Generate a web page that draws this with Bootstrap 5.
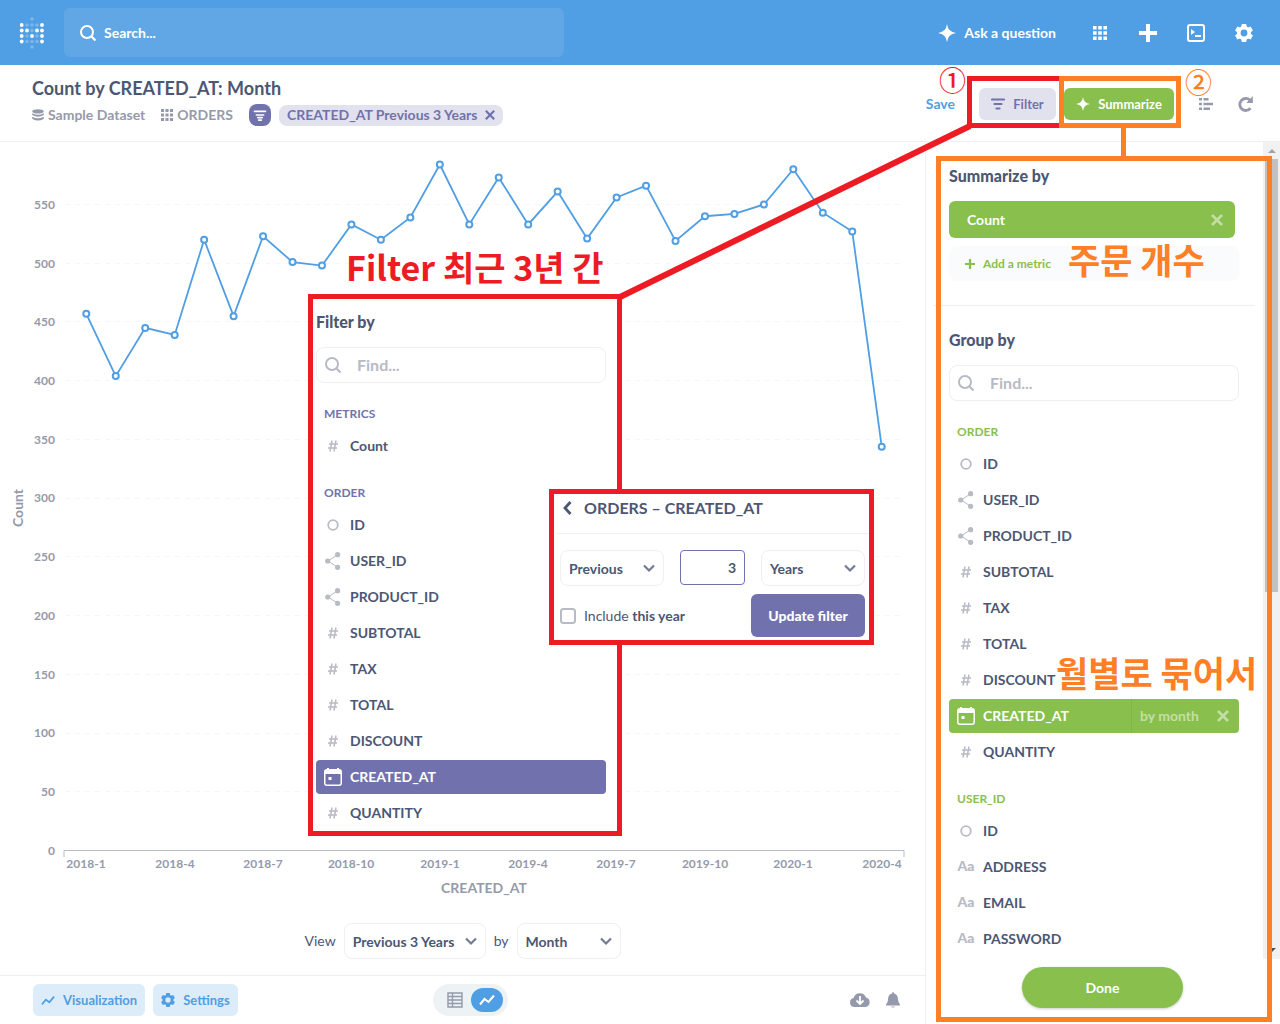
<!DOCTYPE html>
<html lang="en">
<head>
<meta charset="utf-8">
<meta name="viewport" content="width=device-width, initial-scale=1">
<title>Count by CREATED_AT: Month</title>
<link href="https://cdn.jsdelivr.net/npm/bootstrap@5.3.0/dist/css/bootstrap.min.css" rel="stylesheet">
<style>
:root{--ink:#4c5773;--mid:#949aab;--pale:#b8bbc3;--line:#eeeff1;--blue:#509ee3;--green:#88bf4d;--violet:#7172ad;--red:#ed1c24;--orange:#ff7f27}
body{font-family:Lato,"Noto Sans CJK KR",sans-serif;font-size:14px;line-height:20px;color:var(--ink);background:#fff}
.page{min-height:100vh}
svg{display:block;flex-shrink:0}
.ico{width:16px;height:16px;fill:currentColor}
.ico-sm{width:12px;height:12px}
.ico-lg{width:18px;height:18px}
a{color:inherit;text-decoration:none}
.btn{--bs-btn-font-size:14px;--bs-btn-line-height:20px;--bs-btn-border-width:0px}
.topbar{background:var(--blue);height:65px;color:#fff}
.topbar .btn{--bs-btn-color:#fff;--bs-btn-hover-color:#fff}
.sitesearch{width:500px;height:49px;border-radius:6px;background:rgba(255,255,255,.1)}
.sitesearch input,.finder input{background:none;border:0;outline:0;font-weight:700;min-width:0}
.sitesearch input{color:#fff}
.sitesearch input::placeholder{color:#fff;opacity:1}
.navico{width:48px;height:48px}
.qhead{height:77px;border-bottom:1px solid var(--line)}
.qtext{padding:11px 0 0 32px}
.qtitle{font-size:18px;line-height:24px;font-weight:700}
.qtools{padding:1px 26px 0 0}
.toolbtn{--bs-btn-color:var(--mid);margin-left:25px}
.crumb{color:var(--mid);font-weight:700}
.fbadge{width:22px;height:22px;border-radius:8px;background:var(--violet);color:#fff}
.fpill{height:21px;border-radius:8px;background:#e2e1ee;color:var(--violet);font-weight:700}
.fpill .btn{--bs-btn-color:var(--violet)}
.savelink{color:var(--blue);font-weight:700}
.headbtn{--bs-btn-font-size:13px;--bs-btn-font-weight:700;height:32px;border-radius:6px}
.btn-filter{--bs-btn-bg:#e2e1ee;--bs-btn-color:var(--violet);--bs-btn-hover-bg:#d5d4e6;width:77px}
.btn-sum{--bs-btn-bg:var(--green);--bs-btn-color:#fff;--bs-btn-hover-bg:#7bb041;--bs-btn-hover-color:#fff;width:110px}
.chart text{font-weight:700;font-size:12px;fill:var(--mid)}
.chart .axis-name{font-size:14px}
.pick{border:1px solid var(--line);border-radius:8px;height:36px;font-size:14px;font-weight:700;color:var(--ink);padding:0 28px 0 8px;background-position:right 8px center;background-size:12px 12px;
--bs-form-select-bg-img:url("data:image/svg+xml,%3csvg xmlns='http://www.w3.org/2000/svg' viewBox='0 0 12 12'%3e%3cpath fill='none' stroke='%23727b92' stroke-width='2.2' d='M1 3.5l5 5 5-5'/%3e%3c/svg%3e")}
.pick-wide{width:142px}
.pick-std{width:104px}
.foot{height:49px;border-top:1px solid var(--line);padding:0 17px 0 33px}
.footside{flex:1 1 0}
.btn-vis{--bs-btn-bg:#dcecf9;--bs-btn-color:var(--blue);--bs-btn-hover-bg:#cbe2f6;--bs-btn-font-size:13px;--bs-btn-font-weight:700;height:32px;border-radius:6px;padding:0 8px}
.switcher{width:75px;height:32px;border-radius:16px;background:#edf2f5;color:var(--mid)}
.switcher .btn{width:32px;height:24px;border-radius:12px;color:inherit}
.switcher .btn.active{background:var(--blue);color:#fff}
.utility{fill:var(--mid)}
.side{width:355px;border-left:1px solid var(--line)}
.side-body{padding:22px 24px 0 23px}
.ptitle{font-size:16px;line-height:24px;font-weight:900;margin-bottom:13px}
.metric{height:37px;border-radius:6px;background:var(--green);color:#fff;font-weight:700;padding:0 12px 0 18px;margin-right:4px}
.addmetric{height:35px;border-radius:8px;background:#f9fbfc;color:var(--green);font-size:12px;font-weight:700;margin-top:8px;padding:0 16px}
.split{height:1px;background:var(--line);margin:24px -16px 22px}
.finder{height:36px;border:1px solid var(--line);border-radius:8px;padding:0 8px;margin-bottom:3px;color:var(--pale)}
.finder input{font-size:16px;color:var(--ink);margin-left:16px}
.finder input::placeholder{color:var(--pale);opacity:1}
.ghead{font-size:12px;line-height:16px;font-weight:700;padding:20px 8px 7px;color:var(--green)}
.ghead-v{color:var(--violet)}
.field{height:34px;border-radius:4px;margin-bottom:2px;padding-left:8px;font-weight:700}
.field>.kind{width:18px;margin-right:8px;color:var(--pale);display:flex;justify-content:center}
.field.on{background:var(--green);color:#fff}
.field.on>.kind{color:#fff}
.field.on-v{background:var(--violet)}
.kind.txt{font-weight:900;padding-bottom:2px}
.bucket{width:108px;border-left:1px solid #7fb545;color:rgba(255,255,255,.5);padding:0 10px 0 8px}
.sbar{width:17px;background:#f1f1f1}
.sthumb{width:13px;height:433px;background:#c1c1c1}
.arrow{width:17px;height:17px;fill:#a3a3a3}
.arrow-dark{fill:#505050}
.donebar{padding:8px 1px 16px 0}
.btn-done{--bs-btn-bg:var(--green);--bs-btn-color:#fff;--bs-btn-hover-bg:#7bb041;--bs-btn-hover-color:#fff;--bs-btn-font-weight:700;width:161px;height:41px;border-radius:21px;box-shadow:0 1px 3px rgba(0,0,0,.2)}
/* call-outs drawn over the page */
.callout{position:absolute;background:#fff;border:5px solid var(--red)}
.co-filter{left:308px;top:294px;width:314px;height:542px;padding:11px 11px 0 3px}
.co-edit{left:549px;top:489px;width:325px;height:156px}
.edit-title{height:40px;padding:0 6px 12px 5px;margin-left:3px;gap:12px;border-bottom:1px solid var(--line);font-size:16px;font-weight:700}
.edit-body{padding:16px 4px 0 6px}
.numbox{width:65px;height:35px;border:1px solid var(--violet);border-radius:4px;text-align:right;padding:0 8px;color:var(--ink);font-weight:700;outline:0}
.inccheck{width:16px;height:16px;border:2px solid var(--pale);border-radius:4px;margin:0}
.btn-update{--bs-btn-bg:var(--violet);--bs-btn-color:#fff;--bs-btn-hover-bg:#61629b;--bs-btn-hover-color:#fff;--bs-btn-font-weight:900;width:114px;height:43px;border-radius:6px}
.ink{position:absolute;left:0;top:0;pointer-events:none}
.ink text{font-family:"Noto Sans CJK KR",sans-serif;font-weight:700;font-size:35px}
.ink .note-red{font-size:34px}
.ink .num{font-size:27px;font-weight:500}
</style>
<script src="https://cdn.jsdelivr.net/npm/bootstrap@5.3.0/dist/js/bootstrap.bundle.min.js"></script>
</head>
<body>
<svg class="d-none" aria-hidden="true">
  <symbol id="i-search" viewBox="0 0 16 16"><circle cx="7" cy="7" r="6" fill="none" stroke="currentColor" stroke-width="2"/><path d="M11.5 11.5l4 4" stroke="currentColor" stroke-width="2.200"/></symbol>
  <symbol id="i-star" viewBox="0 0 16 16"><path d="M8 0Q8.800 7.200 16 8Q8.800 8.800 8 16Q7.200 8.800 0 8Q7.200 7.200 8 0z"/></symbol>
  <symbol id="i-grid" viewBox="0 0 14 14"><path d="M0 0h3.600v3.600H0zM5.200 0h3.600v3.600H5.200zM10.400 0H14v3.600h-3.600zM0 5.200h3.600v3.600H0zM5.200 5.200h3.600v3.600H5.200zM10.400 5.200H14v3.600h-3.600zM0 10.400h3.600V14H0zM5.200 10.400h3.600V14H5.200zM10.400 10.400H14V14h-3.600z"/></symbol>
  <symbol id="i-plus" viewBox="0 0 18 18"><path d="M7 0h4v7h7v4h-7v7H7v-7H0V7h7z"/></symbol>
  <symbol id="i-term" viewBox="0 0 18 18"><rect x="1" y="1" width="16" height="16" rx="2" fill="none" stroke="currentColor" stroke-width="2"/><path d="M4 5l4 3-4 3z"/><path d="M8 11h6v2H8z"/></symbol>
  <symbol id="i-gear" viewBox="0 0 18 18"><circle cx="9" cy="9" r="5.200" fill="none" stroke="currentColor" stroke-width="3.600"/><path d="M6.800 0h4.400l.8 4H6zM6.800 18h4.400l.8-4H6z"/><path d="M6.800 0h4.400l.8 4H6zM6.800 18h4.400l.8-4H6z" transform="rotate(60 9 9)"/><path d="M6.800 0h4.400l.8 4H6zM6.800 18h4.400l.8-4H6z" transform="rotate(120 9 9)"/></symbol>
  <symbol id="i-db" viewBox="0 0 12 12"><ellipse cx="6" cy="2.400" rx="5.800" ry="2.200"/><path d="M.2 4.200q5.800 3.200 11.600 0v1.800q-5.800 3.600-11.600 0zM.2 7.700q5.800 3.200 11.600 0v2q-5.800 3.800-11.600 0z"/></symbol>
  <symbol id="i-funnel" viewBox="0 0 14 12"><path d="M1 1.500h12M3 5.500h8M4.500 8.300h5M5.500 11h3" fill="none" stroke="currentColor" stroke-width="1.800" stroke-linecap="round"/></symbol>
  <symbol id="i-funnel3" viewBox="0 0 14 12"><path d="M1 1.500h12M3.500 6h7M5.500 10.500h3" fill="none" stroke="currentColor" stroke-width="2.200" stroke-linecap="round"/></symbol>
  <symbol id="i-x" viewBox="0 0 12 12"><path d="M1 1l10 10M11 1L1 11" stroke="currentColor" stroke-width="2.600"/></symbol>
  <symbol id="i-list" viewBox="0 0 14 12"><path d="M0 0h3v2.600H0zM4.500 0h5v2.600h-5zM0 4.700h3v2.600H0zM4.500 4.700H14v2.600H4.500zM0 9.400h3V12H0zM4.500 9.400H11V12H4.500z"/></symbol>
  <symbol id="i-reload" viewBox="0 0 16 16"><path d="M12.500 12.200A6 6 0 1 1 11.800 4" fill="none" stroke="currentColor" stroke-width="2.800"/><path d="M14.800 0v7H8.300z"/></symbol>
  <symbol id="i-trend" viewBox="0 0 16 12"><path d="M1 10.500L5.500 5l4 3L15 1.500" fill="none" stroke="currentColor" stroke-width="2"/></symbol>
  <symbol id="i-table" viewBox="0 0 16 16"><path d="M1 1h14v14H1zM1 4.500h14M1 8h14M1 11.500h14M5.500 1v14" fill="none" stroke="currentColor" stroke-width="1.400"/></symbol>
  <symbol id="i-cloud" viewBox="0 0 20 14"><path d="M4.500 14A4.500 4.500 0 0 1 3.600 5.100 6.500 6.500 0 0 1 16 4.600 4.800 4.800 0 0 1 15.500 14z"/><path d="M10 3v8M6.500 7.500L10 11l3.500-3.500" fill="none" stroke="#fff" stroke-width="1.800"/></symbol>
  <symbol id="i-bell" viewBox="0 0 14 16"><path d="M7 0q1 0 1 1.500 4 .8 4 6 0 3 2 5v1H0v-1q2-2 2-5 0-5.200 4-6Q6 0 7 0z"/><path d="M5 14.200h4q-.5 1.600-2 1.600t-2-1.600z" opacity=".6"/></symbol>
  <symbol id="i-hash" viewBox="0 0 10 12"><path d="M4 .5L2 11.500M8 .5L6 11.500M1 4h9M0 8h9" fill="none" stroke="currentColor" stroke-width="1.500"/></symbol>
  <symbol id="i-ring" viewBox="0 0 12 12"><circle cx="6" cy="6" r="4.800" fill="none" stroke="currentColor" stroke-width="1.800"/></symbol>
  <symbol id="i-share" viewBox="0 0 16 18"><path d="M13 2.500L3 9l10 6.500" fill="none" stroke="currentColor"/><circle cx="2.700" cy="9" r="2.600"/><circle cx="12.600" cy="2.700" r="2.600"/><circle cx="12.600" cy="15.300" r="2.600"/></symbol>
  <symbol id="i-cal" viewBox="0 0 18 18"><path d="M3 0h2v1h8V0h2v1q3 .2 3 3v11q0 3-3 3H3q-3 0-3-3V4q0-2.800 3-3zM1.500 6v9q0 1.500 1.500 1.500h12q1.500 0 1.500-1.500V6z" fill-rule="evenodd"/><path d="M4.500 9h3v3h-3z"/></symbol>
  <symbol id="i-back" viewBox="0 0 10 14"><path d="M8.500 1L3 7l5.500 6" fill="none" stroke="currentColor" stroke-width="2.800"/></symbol>
</svg>

<div class="page position-relative d-flex flex-column">
  <header class="topbar d-flex align-items-center">
    <a href="#" class="ps-3" aria-label="Home">
      <svg width="32" height="34" viewBox="0 0 32 34" fill="#fff">
        <g opacity=".25"><circle cx="16" cy="3" r="1.800"/><circle cx="11" cy="9" r="1.800"/><circle cx="16" cy="9" r="1.800"/><circle cx="21" cy="9" r="1.800"/><circle cx="16" cy="14.500" r="1.800"/><circle cx="11" cy="20" r="1.800"/><circle cx="21" cy="20" r="1.800"/><circle cx="11" cy="25.500" r="1.800"/><circle cx="16" cy="25.500" r="1.800"/><circle cx="21" cy="25.500" r="1.800"/><circle cx="16" cy="31" r="1.800"/></g>
        <circle cx="5.700" cy="9" r="1.900"/><circle cx="26" cy="9" r="1.900"/><circle cx="5.700" cy="14.500" r="1.900"/><circle cx="11" cy="14.500" r="1.900"/><circle cx="21" cy="14.500" r="1.900"/><circle cx="26" cy="14.500" r="1.900"/><circle cx="5.700" cy="20" r="1.900"/><circle cx="16" cy="20" r="1.900"/><circle cx="26" cy="20" r="1.900"/><circle cx="5.700" cy="25.500" r="1.900"/><circle cx="26" cy="25.500" r="1.900"/>
      </svg>
    </a>
    <label class="sitesearch d-flex align-items-center gap-2 ms-3 px-3">
      <svg class="ico"><use href="#i-search"/></svg>
      <input class="p-0 flex-grow-1" type="search" placeholder="Search..." aria-label="Search">
    </label>
    <nav class="ms-auto d-flex align-items-center pe-2 me-1">
      <a href="#" class="d-flex align-items-center gap-2 fw-bold me-3 pe-1"><svg class="ico ico-lg"><use href="#i-star"/></svg>Ask a question</a>
      <button class="btn navico p-0 d-flex align-items-center justify-content-center" aria-label="Browse data"><svg width="14" height="14" fill="currentColor"><use href="#i-grid"/></svg></button>
      <button class="btn navico p-0 d-flex align-items-center justify-content-center" aria-label="Create"><svg class="ico ico-lg"><use href="#i-plus"/></svg></button>
      <button class="btn navico p-0 d-flex align-items-center justify-content-center" aria-label="Write SQL"><svg class="ico ico-lg"><use href="#i-term"/></svg></button>
      <button class="btn navico p-0 d-flex align-items-center justify-content-center" aria-label="Settings"><svg class="ico ico-lg"><use href="#i-gear"/></svg></button>
    </nav>
  </header>

  <section class="qhead d-flex justify-content-between">
    <div class="qtext">
      <h1 class="qtitle mb-0">Count by CREATED_AT: Month</h1>
      <div class="d-flex align-items-center mt-1">
        <a href="#" class="crumb d-flex align-items-center gap-1 me-3"><svg class="ico ico-sm"><use href="#i-db"/></svg>Sample Dataset</a>
        <a href="#" class="crumb d-flex align-items-center gap-1 me-3"><svg class="ico ico-sm"><use href="#i-grid"/></svg>ORDERS</a>
        <span class="fbadge d-flex align-items-center justify-content-center me-2"><svg width="14" height="11"><use href="#i-funnel"/></svg></span>
        <span class="fpill d-flex align-items-center px-2 gap-2">CREATED_AT Previous 3 Years<button class="btn p-0" aria-label="Remove filter"><svg width="10" height="10"><use href="#i-x"/></svg></button></span>
      </div>
    </div>
    <div class="qtools d-flex align-items-center">
      <a href="#" class="savelink me-4">Save</a>
      <button class="btn btn-filter headbtn p-0 me-2 d-flex align-items-center justify-content-center gap-2"><svg width="14" height="12"><use href="#i-funnel3"/></svg>Filter</button>
      <button class="btn btn-sum headbtn p-0 d-flex align-items-center justify-content-center gap-2"><svg width="14" height="14" fill="currentColor"><use href="#i-star"/></svg>Summarize</button>
      <button class="btn toolbtn p-0" aria-label="Show editor"><svg width="14" height="12" fill="currentColor"><use href="#i-list"/></svg></button>
      <button class="btn toolbtn p-0" aria-label="Refresh"><svg class="ico"><use href="#i-reload"/></svg></button>
    </div>
  </section>

  <div class="d-flex flex-grow-1">
    <main class="flex-grow-1 d-flex flex-column">
      <svg class="chart w-100" viewBox="0 142 925 781" role="img" aria-label="Count by month">
        <g stroke="#f5f6f7" stroke-dasharray="5 5"><path d="M65 204.500H904M65 263.500H904M65 321.500H904M65 380.500H904M65 439.500H904M65 498.500H904M65 556.500H904M65 615.500H904M65 674.500H904M65 733.500H904M65 791.500H904"/></g>
        <g text-anchor="end"><text x="55" y="209">550</text><text x="55" y="268">500</text><text x="55" y="326">450</text><text x="55" y="385">400</text><text x="55" y="444">350</text><text x="55" y="502">300</text><text x="55" y="561">250</text><text x="55" y="620">200</text><text x="55" y="679">150</text><text x="55" y="737">100</text><text x="55" y="796">50</text><text x="55" y="855">0</text></g>
        <path d="M64 857V850.500H904V857" fill="none" stroke="#b8bbc8"/>
        <g text-anchor="middle"><text x="86" y="868">2018-1</text><text x="175" y="868">2018-4</text><text x="263" y="868">2018-7</text><text x="351" y="868">2018-10</text><text x="440" y="868">2019-1</text><text x="528" y="868">2019-4</text><text x="616" y="868">2019-7</text><text x="705" y="868">2019-10</text><text x="793" y="868">2020-1</text><text x="882" y="868">2020-4</text>
        <text class="axis-name" x="484" y="893">CREATED_AT</text><text class="axis-name" transform="translate(23 508) rotate(-90)">Count</text></g>
        <g id="series" fill="none" stroke="#509ee3" stroke-width="2"></g>
      </svg>
      <div class="d-flex align-items-center justify-content-center gap-2 pb-3">
        <label for="v1">View</label>
        <select id="v1" class="form-select pick pick-wide"><option>Previous 3 Years</option></select>
        <label for="v2">by</label>
        <select id="v2" class="form-select pick pick-std"><option>Month</option></select>
      </div>
      <footer class="foot mt-auto d-flex align-items-center">
        <div class="footside d-flex gap-2">
          <button class="btn btn-vis d-flex align-items-center gap-2"><svg width="14" height="11"><use href="#i-trend"/></svg>Visualization</button>
          <button class="btn btn-vis d-flex align-items-center gap-2"><svg width="14" height="14" fill="currentColor"><use href="#i-gear"/></svg>Settings</button>
        </div>
        <div class="switcher d-flex align-items-center justify-content-center">
          <button class="btn p-0 d-flex align-items-center justify-content-center" aria-label="Table"><svg class="ico"><use href="#i-table"/></svg></button>
          <button class="btn active p-0 d-flex align-items-center justify-content-center" aria-label="Chart"><svg width="16" height="12"><use href="#i-trend"/></svg></button>
        </div>
        <div class="footside utility d-flex align-items-center justify-content-end gap-3">
          <button class="btn p-0" aria-label="Download"><svg width="20" height="14"><use href="#i-cloud"/></svg></button>
          <button class="btn p-0 me-2" aria-label="Alerts"><svg width="14" height="16"><use href="#i-bell"/></svg></button>
        </div>
      </footer>
    </main>

    <aside class="side flex-shrink-0 d-flex flex-column">
      <div class="d-flex flex-grow-1">
        <div class="side-body flex-grow-1">
          <h2 class="ptitle">Summarize by</h2>
          <div class="metric d-flex align-items-center justify-content-between">Count<button class="btn p-0 opacity-50" aria-label="Remove Count"><svg class="ico ico-sm text-white"><use href="#i-x"/></svg></button></div>
          <a href="#" class="addmetric d-flex align-items-center gap-2"><svg width="10" height="10" fill="currentColor"><use href="#i-plus"/></svg>Add a metric</a>
          <div class="split"></div>
          <h2 class="ptitle">Group by</h2>
          <label class="finder d-flex align-items-center"><svg class="ico"><use href="#i-search"/></svg><input class="flex-grow-1 p-0" type="text" placeholder="Find..." aria-label="Find a column"></label>
          <div class="ghead">ORDER</div>
          <a href="#" class="field d-flex align-items-center"><span class="kind"><svg class="ico ico-sm"><use href="#i-ring"/></svg></span>ID</a>
          <a href="#" class="field d-flex align-items-center"><span class="kind"><svg width="16" height="18" fill="currentColor"><use href="#i-share"/></svg></span>USER_ID</a>
          <a href="#" class="field d-flex align-items-center"><span class="kind"><svg width="16" height="18" fill="currentColor"><use href="#i-share"/></svg></span>PRODUCT_ID</a>
          <a href="#" class="field d-flex align-items-center"><span class="kind"><svg width="10" height="12"><use href="#i-hash"/></svg></span>SUBTOTAL</a>
          <a href="#" class="field d-flex align-items-center"><span class="kind"><svg width="10" height="12"><use href="#i-hash"/></svg></span>TAX</a>
          <a href="#" class="field d-flex align-items-center"><span class="kind"><svg width="10" height="12"><use href="#i-hash"/></svg></span>TOTAL</a>
          <a href="#" class="field d-flex align-items-center"><span class="kind"><svg width="10" height="12"><use href="#i-hash"/></svg></span>DISCOUNT</a>
          <div class="field on d-flex align-items-center"><span class="kind"><svg class="ico ico-lg"><use href="#i-cal"/></svg></span>CREATED_AT
            <div class="bucket ms-auto h-100 d-flex align-items-center justify-content-between">by month<svg class="ico ico-sm"><use href="#i-x"/></svg></div></div>
          <a href="#" class="field d-flex align-items-center"><span class="kind"><svg width="10" height="12"><use href="#i-hash"/></svg></span>QUANTITY</a>
          <div class="ghead">USER_ID</div>
          <a href="#" class="field d-flex align-items-center"><span class="kind"><svg class="ico ico-sm"><use href="#i-ring"/></svg></span>ID</a>
          <a href="#" class="field d-flex align-items-center"><span class="kind txt">Aa</span>ADDRESS</a>
          <a href="#" class="field d-flex align-items-center"><span class="kind txt">Aa</span>EMAIL</a>
          <a href="#" class="field d-flex align-items-center"><span class="kind txt">Aa</span>PASSWORD</a>
        </div>
        <div class="sbar d-flex flex-column align-items-center">
          <svg class="arrow" viewBox="0 0 17 17"><path d="M5 11l4-4 4 4z"/></svg>
          <div class="sthumb"></div>
          <svg class="arrow arrow-dark mt-auto" viewBox="0 0 17 17"><path d="M5 6l4 4 4-4z"/></svg>
        </div>
      </div>
      <div class="donebar d-flex justify-content-center"><button class="btn btn-done">Done</button></div>
    </aside>
  </div>

  <svg class="ink" width="1280" height="1024" fill="none" stroke-width="5">
    <path d="M970 126L620 297" stroke="#ed1c24" stroke-width="6"/>
    <path d="M1061 78.500H969.500V125.500H1061" stroke="#ed1c24"/>
    <rect x="1061.500" y="78.500" width="117" height="47" stroke="#ff7f27"/>
    <path d="M1123.500 128V157" stroke="#ff7f27"/>
    <rect x="938.500" y="158.500" width="331" height="861" stroke="#ff7f27"/>
    <g fill="#ed1c24"><text class="note-red" x="346" y="281">Filter 최근 3년 간</text><text class="num" x="939" y="91">①</text></g>
    <g fill="#ff7f27"><text x="1068" y="274">주문 개수</text><text x="1056" y="687">월별로 묶어서</text><text class="num" x="1185" y="93">②</text></g>
  </svg>

  <div class="callout co-filter">
    <h2 class="ptitle">Filter by</h2>
    <label class="finder d-flex align-items-center"><svg class="ico"><use href="#i-search"/></svg><input class="flex-grow-1 p-0" type="text" placeholder="Find..." aria-label="Find a filter"></label>
    <div class="ghead ghead-v">METRICS</div>
    <a href="#" class="field d-flex align-items-center"><span class="kind"><svg width="10" height="12"><use href="#i-hash"/></svg></span>Count</a>
    <div class="ghead ghead-v">ORDER</div>
    <a href="#" class="field d-flex align-items-center"><span class="kind"><svg class="ico ico-sm"><use href="#i-ring"/></svg></span>ID</a>
    <a href="#" class="field d-flex align-items-center"><span class="kind"><svg width="16" height="18" fill="currentColor"><use href="#i-share"/></svg></span>USER_ID</a>
    <a href="#" class="field d-flex align-items-center"><span class="kind"><svg width="16" height="18" fill="currentColor"><use href="#i-share"/></svg></span>PRODUCT_ID</a>
    <a href="#" class="field d-flex align-items-center"><span class="kind"><svg width="10" height="12"><use href="#i-hash"/></svg></span>SUBTOTAL</a>
    <a href="#" class="field d-flex align-items-center"><span class="kind"><svg width="10" height="12"><use href="#i-hash"/></svg></span>TAX</a>
    <a href="#" class="field d-flex align-items-center"><span class="kind"><svg width="10" height="12"><use href="#i-hash"/></svg></span>TOTAL</a>
    <a href="#" class="field d-flex align-items-center"><span class="kind"><svg width="10" height="12"><use href="#i-hash"/></svg></span>DISCOUNT</a>
    <a href="#" class="field on on-v d-flex align-items-center"><span class="kind"><svg class="ico ico-lg"><use href="#i-cal"/></svg></span>CREATED_AT</a>
    <a href="#" class="field d-flex align-items-center"><span class="kind"><svg width="10" height="12"><use href="#i-hash"/></svg></span>QUANTITY</a>
  </div>

  <div class="callout co-edit">
    <div class="edit-title d-flex align-items-center"><svg width="10" height="14"><use href="#i-back"/></svg><span>ORDERS – CREATED_AT</span></div>
    <div class="edit-body">
      <div class="d-flex justify-content-between mb-2">
        <select class="form-select pick pick-std" aria-label="Direction"><option>Previous</option></select>
        <input class="numbox" type="text" value="3" aria-label="Amount">
        <select class="form-select pick pick-std" aria-label="Unit"><option>Years</option></select>
      </div>
      <div class="d-flex justify-content-between align-items-center">
        <div class="d-flex align-items-center gap-2"><input id="inc" type="checkbox" class="form-check-input inccheck"><label for="inc">Include <b>this year</b></label></div>
        <button class="btn btn-update p-0">Update filter</button>
      </div>
    </div>
  </div>
</div>

<script>
// Monthly order counts, 2018-1 to 2020-4
const counts=[457,404,445,439,520,455,523,501,498,533,520,539,584,533,573,533,561,521,556,566,519,540,542,550,580,543,527,344];
const pts=counts.map((v,i)=>[86.3+i*29.46,851-v*1.1755]);
document.getElementById('series').innerHTML=
  '<polyline stroke-width="1.8" points="'+pts.map(p=>p.join()).join(' ')+'"/>'+
  pts.map(p=>'<circle cx="'+p[0]+'" cy="'+p[1]+'" r="3" fill="#fff"/>').join('');
</script>
</body>
</html>
